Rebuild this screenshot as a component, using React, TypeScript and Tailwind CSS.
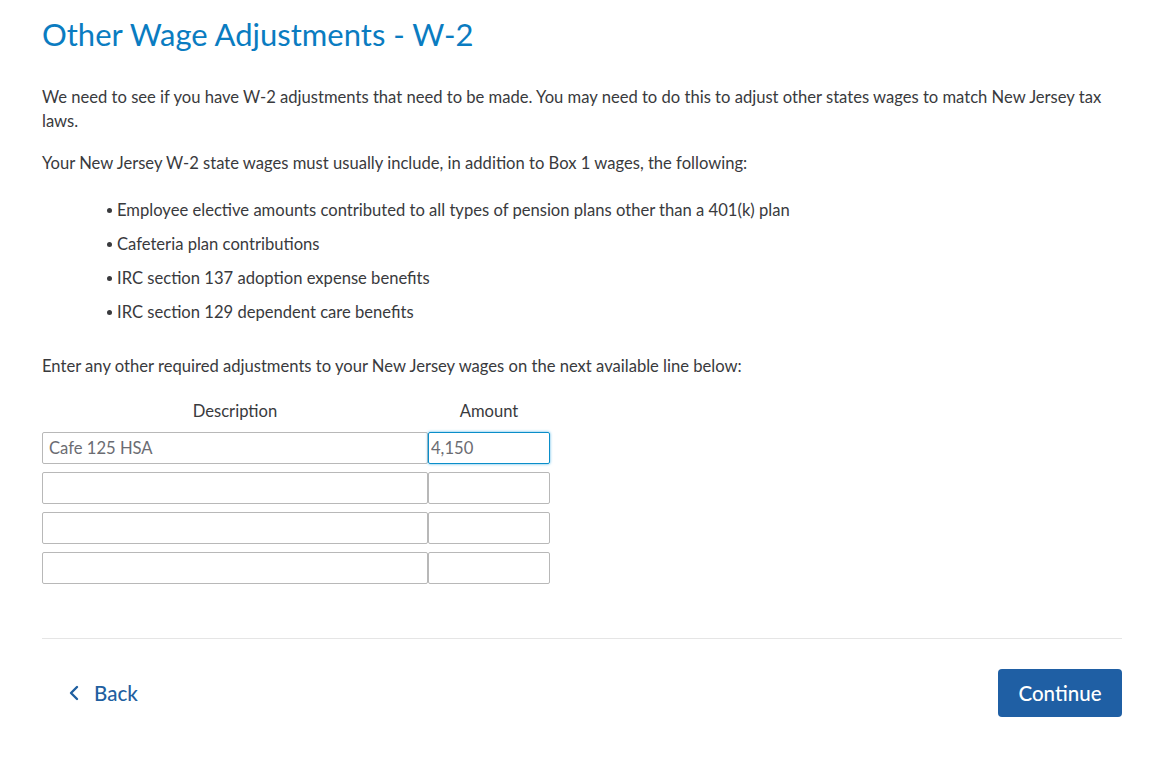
import { useState } from "react";

const bullets = [
    "Employee elective amounts contributed to all types of pension plans other than a 401(k) plan",
    "Cafeteria plan contributions",
    "IRC section 137 adoption expense benefits",
    "IRC section 129 dependent care benefits",
];

const App: React.FC = () => {
    const [rows, setRows] = useState([
        { desc: "Cafe 125 HSA", amount: "4,150" },
        { desc: "", amount: "" },
        { desc: "", amount: "" },
        { desc: "", amount: "" },
    ]);

    const update = (i: number, key: "desc" | "amount", value: string) => {
        setRows(rows.map((r, idx) => (idx === i ? { ...r, [key]: value } : r)));
    };

    return (
        <div className="min-h-screen bg-white pl-[42px] pr-[53px] pt-[14px] font-['Lato','Noto_Sans',sans-serif] text-[#393a3d]">
            <h1 className="text-[31px] leading-[40px] text-[#0a7cc1]">Other Wage Adjustments - W-2</h1>

            <p className="mt-[31px] text-[16.6px] leading-[24px]">
                We need to see if you have W-2 adjustments that need to be made. You may need to do this to adjust other
                states wages to match New Jersey tax laws.
            </p>
            <p className="mt-[18px] text-[16.6px] leading-[24px]">
                Your New Jersey W-2 state wages must usually include, in addition to Box 1 wages, the following:
            </p>

            <ul className="mt-[23px] flex flex-col gap-[10px] pl-[65px]">
                {bullets.map((b) => (
                    <li key={b} className="flex items-center gap-[5px] text-[16.6px] leading-[24px]">
                        <span className="h-[5px] w-[5px] rounded-full bg-[#393a3d]" />
                        {b}
                    </li>
                ))}
            </ul>

            <p className="mt-[30px] text-[16.6px] leading-[24px]">
                Enter any other required adjustments to your New Jersey wages on the next available line below:
            </p>

            <div className="mt-[21px] w-[508px]">
                <div className="flex text-[16.6px] leading-[24px]">
                    <div className="w-[386px] text-center">Description</div>
                    <div className="w-[122px] text-center">Amount</div>
                </div>
                <div className="mt-[9px] flex flex-col gap-[8px]">
                    {rows.map((r, i) => (
                        <div key={i} className="flex">
                            <input
                                value={r.desc}
                                onChange={(e) => update(i, "desc", e.target.value)}
                                className="h-[32px] w-[386px] rounded-[2px] border border-[#b8b8b8] px-[6px] text-[16.6px] text-[#6b6c72] outline-none"
                            />
                            <input
                                value={r.amount}
                                onChange={(e) => update(i, "amount", e.target.value)}
                                className={`h-[32px] w-[122px] rounded-[2px] border px-[2px] text-[16.6px] text-[#6b6c72] outline-none ${
                                    i === 0 ? "border-[#0a8ec9] shadow-[0_0_3px_#4fb4e6]" : "border-[#b8b8b8]"
                                }`}
                            />
                        </div>
                    ))}
                </div>
            </div>

            <div className="mt-[54px] border-t border-[#e5e5e5]" />

            <div className="mt-[30px] flex items-center justify-between">
                <button className="ml-[26px] flex items-center gap-[14px] text-[20.5px] font-medium text-[#1f5fa0]">
                    <svg width="12" height="16" viewBox="0 0 12 16" fill="none">
                        <path d="M9 2 L3 8 L9 14" stroke="#1f5fa0" strokeWidth="2.4" strokeLinecap="round" strokeLinejoin="round" />
                    </svg>
                    Back
                </button>
                <button className="h-[48px] w-[124px] rounded-[4px] bg-[#1f5fa4] text-[20.5px] font-medium text-white">
                    Continue
                </button>
            </div>
        </div>
    );
};

export default App;
